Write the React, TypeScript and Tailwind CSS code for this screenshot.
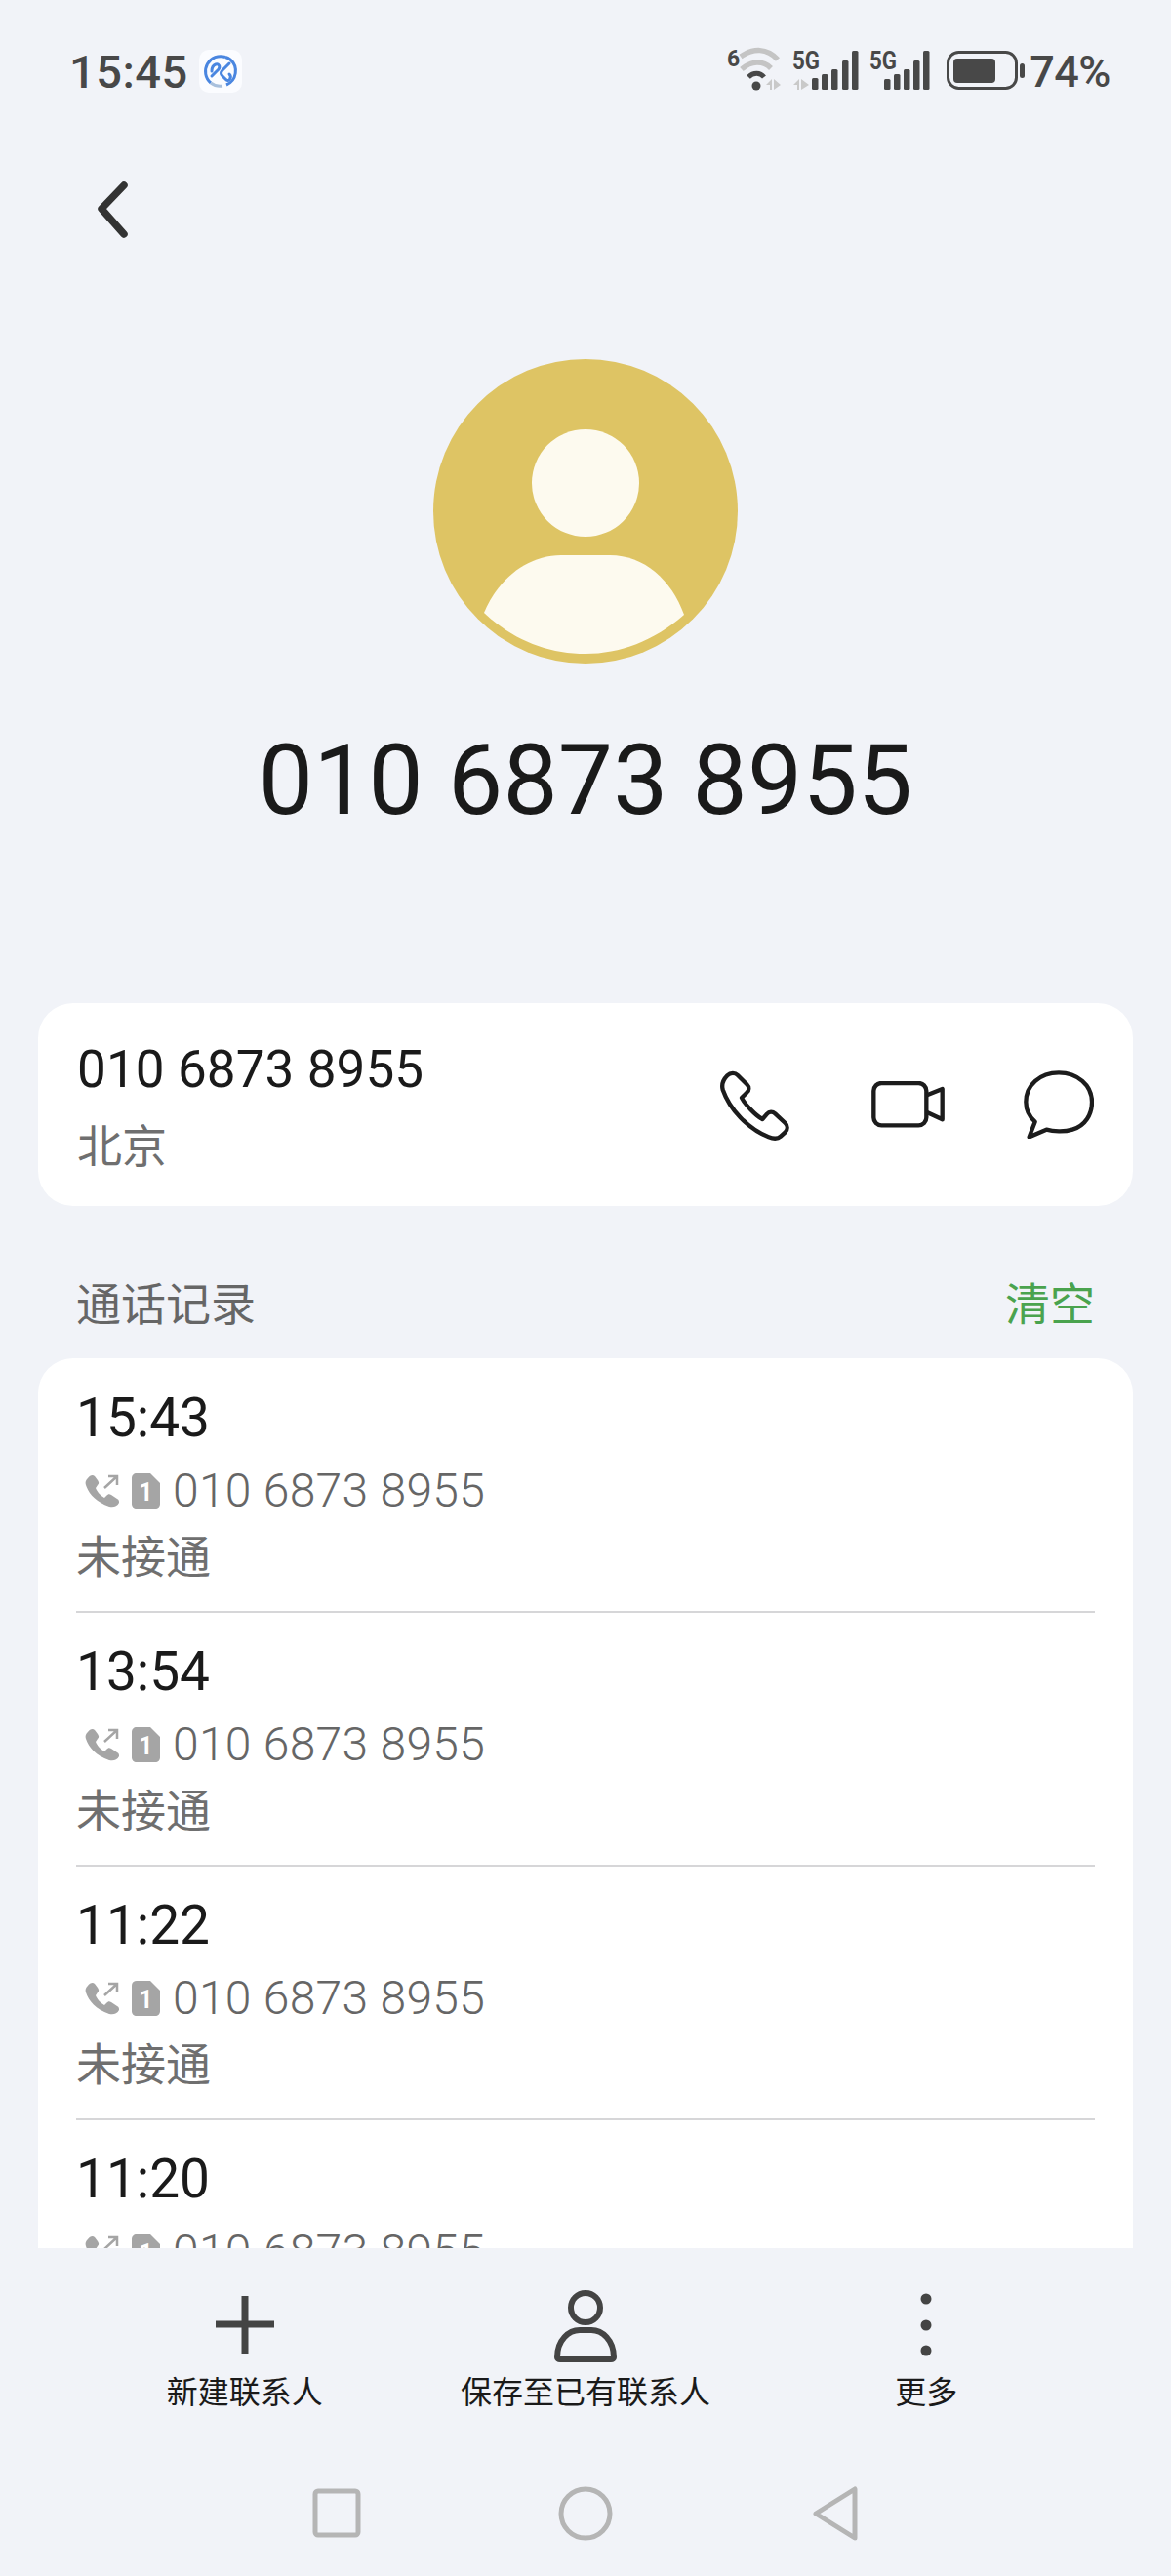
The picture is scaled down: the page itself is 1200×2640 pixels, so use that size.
const sans = "font-['Roboto','Noto_Sans_CJK_SC',sans-serif]"

const calls = ["15:43", "13:54", "11:22", "11:20"]

const StatusIcons = () => (
  <svg width="312" height="66" viewBox="740 40 312 66" fill="none">
    <text x="745" y="68" fontFamily="Roboto" fontWeight="700" fontSize="23" fill="#484848">6</text>
    <path d="M759 58 C772 49 786 49 797 61" stroke="#c4c4c4" strokeWidth="5.5" />
    <path d="M760 71 C770 62 782 62 790 70" stroke="#c4c4c4" strokeWidth="5.5" />
    <path d="M767 79 C772 74 779 74 783 79" stroke="#484848" strokeWidth="5" />
    <circle cx="775" cy="88" r="4.5" fill="#484848" />
    <path d="M785 87 L791 81 V92 H789 V87 Z M793 81 L800 87 L793 92 Z" fill="#c9c9c9" />
    <text x="812" y="71" fontFamily="Roboto" fontWeight="700" fontSize="25" fill="#484848" textLength="28" lengthAdjust="spacingAndGlyphs">5G</text>
    <path d="M813 87 L819 81 V92 H817 V87 Z M821 81 L829 87 L821 92 Z" fill="#c9c9c9" />
    {[[832, 80], [842, 76], [852, 71], [863, 62], [873, 52]].map(([x, y]) => (
      <rect key={x} x={x} y={y} width="6.5" height={92 - y} rx="1.5" fill="#484848" />
    ))}
    <text x="891" y="71" fontFamily="Roboto" fontWeight="700" fontSize="25" fill="#484848" textLength="28" lengthAdjust="spacingAndGlyphs">5G</text>
    {[[906, 81], [916, 76], [926, 71], [936, 62], [946, 52]].map(([x, y]) => (
      <rect key={x} x={x} y={y} width="6.5" height={92 - y} rx="1.5" fill="#484848" />
    ))}
    <rect x="971.5" y="53.5" width="70" height="37" rx="11" stroke="#484848" strokeWidth="3" />
    <rect x="977" y="60" width="43" height="25" rx="4" fill="#484848" />
    <rect x="1045" y="65" width="5" height="15" rx="2.5" fill="#484848" />
  </svg>
)

const AppBadge = () => (
  <svg width="44" height="44" viewBox="0 0 44 44" fill="none">
    <rect width="44" height="44" rx="10" fill="#fbfcff" />
    <path d="M27 7.5 A15.5 15.5 0 0 0 12 34" stroke="#4a86e0" strokeWidth="3" />
    <path d="M12 34 A15.5 15.5 0 0 0 24 37" stroke="#a9c0dc" strokeWidth="3" />
    <path d="M28 36 A15.5 15.5 0 0 0 32 10 A15.5 15.5 0 0 0 27 7.5" stroke="#4a86e0" strokeWidth="3" />
    <path d="M13 27 L20 20 C22 17 20 14 17 15 C14 16 13 19 13 22" stroke="#4a86e0" strokeWidth="3" strokeLinecap="round" strokeLinejoin="round" />
    <path d="M31 14 L24 21 C22 23 22 25 24 27 L28 31 C31 33 34 28 31 25" stroke="#4a86e0" strokeWidth="3" strokeLinecap="round" strokeLinejoin="round" />
  </svg>
)

const Avatar = () => (
  <svg width="312" height="312" viewBox="0 0 312 312">
    <circle cx="156" cy="156" r="156" fill="#dec464" />
    <circle cx="156" cy="127" r="55" fill="#fdfaef" />
    <path d="M52 260 C66 226 96 201 131 201 H181 C216 201 244 226 257 262 C226 289 191 302 156 302 C117 302 82 288 52 260 Z" fill="#fdfaef" />
  </svg>
)

const PhoneIcon = () => (
  <svg width="75" height="75" viewBox="100 100 225 225" fill="none" stroke="#1c1c1c" strokeWidth="13" strokeLinejoin="round">
    <path d="M128 122 C138 112 152 113 160 121 L188 149 C196 157 196 167 188 174 L172 190 C182 210 215 245 236 256 L250 240 C257 232 267 232 275 239 L306 268 C314 276 314 288 306 296 L292 309 C282 318 268 316 255 311 C190 285 135 225 114 165 C110 150 116 134 128 122 Z" />
  </svg>
)

const VideoIcon = () => (
  <svg width="76" height="48" viewBox="570 145 228 144" fill="none" stroke="#1c1c1c" strokeWidth="13" strokeLinejoin="round">
    <rect x="577" y="151" width="162" height="130" rx="24" />
    <path d="M741 188 L788 169 V263 L741 241" />
  </svg>
)

const ChatIcon = () => (
  <svg width="72" height="70" viewBox="1040 110 216 210" fill="none" stroke="#1c1c1c" strokeWidth="13" strokeLinejoin="round">
    <path d="M1110 292 C1130 298 1165 300 1190 292 C1230 280 1250 245 1250 207 C1250 155 1205 117 1148 117 C1090 117 1047 155 1047 207 C1047 232 1058 253 1075 268 L1057 315 Z" />
  </svg>
)

const CallRow = ({ time, last }: { time: string; last: boolean }) => (
  <div className="h-[260px] shrink-0 pt-[30px]">
    <div className="h-[62px] text-[55px] leading-[62px] font-[450] text-[#1a1a1a]">{time}</div>
    <div className="flex h-[86px] items-center pt-[2px]">
      <svg width="36" height="38" viewBox="0 0 36 38" fill="none" className="ml-[9px] shrink-0">
        <path d="M3 6 C1 8 0 10 1 13 C4 22 11 30 25 35 C29 36 33 35 35 31 C35 29 35 28 33 27 L27 23 C25 22 24 22 22 24 L20 26 C16 24 12 19 11 16 L13 13 C15 11 14 10 13 8 L10 4 C8 2 5 3 3 6 Z" fill="#a5a5a5" />
        <path d="M20 16 L33 4 M24 4 H33 V13" stroke="#a5a5a5" strokeWidth="2.5" />
      </svg>
      <svg width="30" height="36" viewBox="0 0 30 36" className="ml-[12px] shrink-0">
        <path d="M5 0 H19 L29 10 V31 C29 34 27 36 24 36 H5 C2 36 0 34 0 31 V5 C0 2 2 0 5 0 Z" fill="#a5a5a5" />
        <text x="14.5" y="28" textAnchor="middle" fontFamily="Roboto" fontWeight="700" fontSize="25" fill="#ffffff">1</text>
      </svg>
      <span className="ml-[12px] text-[48px] leading-none font-light tracking-[0.3px] text-[#666666]">010 6873 8955</span>
    </div>
    <div className="h-[52px] text-[46px] leading-[52px] text-[#6f6f6f]">未接通</div>
    {!last && <div className="mt-[29px] h-[2px] bg-[#d6d6d8]" />}
  </div>
)

const App = () => {
  return (
    <div className={`flex h-[2640px] w-[1200px] flex-col overflow-hidden bg-[#f1f3f8] ${sans}`}>
      <div className="flex h-[146px] shrink-0 items-center pr-[62px] pl-[71px]">
        <span className="text-[47px] leading-none font-medium tracking-[0.5px] text-[#484848]">15:45</span>
        <span className="ml-[11px] flex"><AppBadge /></span>
        <span className="ml-auto flex items-center">
          <StatusIcons />
          <span className="ml-[3px] text-[45px] leading-none font-medium tracking-[-0.5px] text-[#484848]">74%</span>
        </span>
      </div>

      <div className="h-[136px] shrink-0 pt-[40px] pl-[98px]">
        <svg width="36" height="60" viewBox="0 0 36 60" fill="none" stroke="#333333" strokeWidth="7.5" strokeLinecap="round" strokeLinejoin="round">
          <path d="M29 4 L6 28 L29 54" />
        </svg>
      </div>

      <div className="mt-[86px] flex shrink-0 justify-center">
        <Avatar />
      </div>
      <div className="mt-[70px] h-[100px] shrink-0 text-center text-[100px] leading-[100px] font-[450] tracking-[0.2px] text-[#1a1a1a]">
        010 6873 8955
      </div>

      <div className="mx-[39px] mt-[178px] flex h-[208px] shrink-0 items-center justify-between rounded-[36px] bg-white pr-[40px] pl-[40px]">
        <div>
          <div className="h-[68px] text-[53px] leading-[68px] font-[450] tracking-[0.1px] text-[#1a1a1a]">010 6873 8955</div>
          <div className="mt-[17px] h-[56px] text-[46px] leading-[56px] text-[#6f6f6f]">北京</div>
        </div>
        <div className="flex items-center">
          <span className="-translate-x-[1px] flex"><PhoneIcon /></span>
          <span className="ml-[81px] flex"><VideoIcon /></span>
          <span className="ml-[80px] flex"><ChatIcon /></span>
        </div>
      </div>

      <div className="flex h-[156px] shrink-0 items-center justify-between px-[78px] pt-[46px] text-[46px]">
        <span className="text-[#666666]">通话记录</span>
        <span className="text-[#4aa34e]">清空</span>
      </div>

      <div className="mx-[39px] flex h-[912px] shrink-0 flex-col overflow-hidden rounded-t-[36px] bg-white px-[39px]">
        {calls.map((time, i) => (
          <CallRow key={time} time={time} last={i === calls.length - 1} />
        ))}
      </div>

      <div className="grid shrink-0 grid-cols-3 px-[76px] pt-[36px]">
        <div className="flex flex-col items-center">
          <svg width="90" height="90" viewBox="0 0 90 90" fill="none" stroke="#444444" strokeWidth="7">
            <path d="M45 13 V72 M15 42 H75" />
          </svg>
          <span className="mt-[2px] text-[32px] leading-[40px] text-[#1a1a1a]">新建联系人</span>
        </div>
        <div className="flex flex-col items-center">
          <svg width="90" height="90" viewBox="0 0 90 90" fill="none" stroke="#444444" strokeWidth="6">
            <circle cx="45" cy="25" r="15" />
            <path d="M16 76 C16 58 28 48 39 48 H51 C62 48 74 58 74 76 C74 77 73 78 71 78 H19 C17 78 16 77 16 76 Z" />
          </svg>
          <span className="mt-[2px] text-[32px] leading-[40px] text-[#1a1a1a]">保存至已有联系人</span>
        </div>
        <div className="flex flex-col items-center">
          <svg width="90" height="90" viewBox="0 0 90 90" fill="#444444">
            <circle cx="45" cy="16" r="5.5" />
            <circle cx="45" cy="43" r="5.5" />
            <circle cx="45" cy="69" r="5.5" />
          </svg>
          <span className="mt-[2px] text-[32px] leading-[40px] text-[#1a1a1a]">更多</span>
        </div>
      </div>

      <div className="mt-[74px] flex shrink-0 items-center pl-[318px]">
        <svg width="54" height="54" viewBox="0 0 54 54" fill="none" stroke="#b5b5b5" strokeWidth="5">
          <rect x="5" y="4" width="44" height="45" rx="3" />
        </svg>
        <svg width="60" height="60" viewBox="0 0 60 60" fill="none" stroke="#b5b5b5" strokeWidth="5" className="ml-[198px]">
          <circle cx="30" cy="30" r="25" />
        </svg>
        <svg width="52" height="60" viewBox="0 0 52 60" fill="none" stroke="#b5b5b5" strokeWidth="5" strokeLinejoin="round" className="ml-[200px]">
          <path d="M46 5 V55 L6 30 Z" />
        </svg>
      </div>
    </div>
  )
}

export default App
